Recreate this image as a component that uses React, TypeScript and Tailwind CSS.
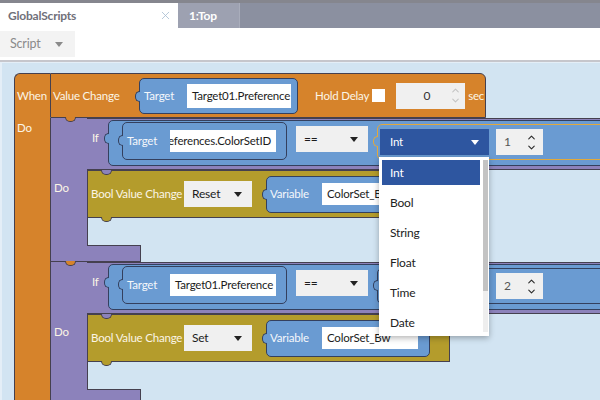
import { ChevronDown, ChevronUp, X } from "lucide-react";

const TYPES = ["Int", "Bool", "String", "Float", "Time", "Date"];

function Caret({ className = "fill-[#222]" }: { className?: string }) {
  return (
    <svg width="8" height="5" viewBox="0 0 8 5" className={`shrink-0 ${className}`}>
      <polygon points="0,0 8,0 4,5" />
    </svg>
  );
}

// little round tab on the left edge of a value block
function LeftNotch({ top, color = "bg-[#6a9bd2]", border = "border-[#34405e]" }: { top: number; color?: string; border?: string }) {
  return (
    <span
      className={`absolute left-[-5px] w-[5px] h-[11px] rounded-l-full border border-r-0 ${color} ${border}`}
      style={{ top }}
    />
  );
}

function TopNotch({ left, color }: { left: number; color: string }) {
  return (
    <span
      className={`absolute top-[-1px] w-[11px] h-[5px] rounded-b-full border border-t-0 border-[#45404f] ${color}`}
      style={{ left }}
    />
  );
}

function Field({ w, h, text, alignEnd }: { w: number; h: number; text: string; alignEnd?: boolean }) {
  return (
    <div
      className={`shrink-0 bg-white flex items-center overflow-hidden whitespace-nowrap text-[11.5px] text-[#1c1c1c] ${alignEnd ? "justify-end pr-[5px]" : "pl-[5px]"}`}
      style={{ width: w, height: h }}
    >
      {text}
    </div>
  );
}

function NumBox({ value, light }: { value: string; light?: boolean }) {
  const c = light ? "text-[#c4c4c4]" : "text-[#2a2a2a]";
  return (
    <div className={`shrink-0 bg-[#f0f0f0] flex items-center ${light ? "w-[69px] h-[26px] justify-end pr-[4px]" : "w-[47px] h-[26px] pl-[8px] justify-between pr-[6px]"}`}>
      <span className={`text-[12px] ${light ? "text-[#333] mr-[20px]" : "text-[#555]"}`}>{value}</span>
      <div className={`flex flex-col ${c}`}>
        <ChevronUp size={11} strokeWidth={2.4} className="-mb-[1px]" />
        <ChevronDown size={11} strokeWidth={2.4} />
      </div>
    </div>
  );
}

function Select({ w, text }: { w: number; text: string }) {
  return (
    <div
      className="shrink-0 h-[26px] bg-[#f0f0f0] flex items-center justify-between pl-[8px] pr-[10px] text-[12px] text-[#1c1c1c]"
      style={{ width: w }}
    >
      <span>{text}</span>
      <Caret />
    </div>
  );
}

function IfBlock({ target, alignEnd, num, action, focused }: { target: string; alignEnd?: boolean; num: string; action: string; focused?: boolean }) {
  return (
    <div className="flex flex-col">
      <div className="flex">
        <div className="w-[37px] shrink-0 bg-[#8c82bb] border-l border-[#45404f] relative pl-[3px] pt-[61px] text-[#fbf5e6]">
          <TopNotch left={14} color="bg-[#d6832b]" />
          Do
        </div>
        <div className="flex-1 flex flex-col">
          <div className="h-[52px] bg-[#8c82bb] border-y border-[#45404f] flex items-start">
            <span className="w-[21px] shrink-0 pl-[5px] pt-[10px] text-[#fbf5e6]">If</span>
            <div className="relative mt-[1px] h-[46px] flex-1 bg-[#6a9bd2] border border-[#34405e] rounded-l-[5px] flex items-start">
              <LeftNotch top={12} />
              <div className="relative shrink-0 ml-[13px] mt-[1px] w-[165px] h-[38px] bg-[#6a9bd2] border border-[#34405e] rounded-[5px] flex items-center">
                <LeftNotch top={12} />
                <span className="w-[47px] shrink-0 pl-[4px] text-[#f4f7fb]">Target</span>
                <Field w={106} h={22} text={target} alignEnd={alignEnd} />
              </div>
              <div className="shrink-0 ml-[9px] mt-[5px]">
                <Select w={72} text="==" />
              </div>
              <div
                className={`relative ml-[9px] mt-[3px] h-[36px] flex-1 bg-[#6a9bd2] border rounded-l-[5px] flex items-center ${focused ? "border-[#e2a93c]" : "border-[#34405e]"}`}
              >
                <LeftNotch top={11} border={focused ? "border-[#e2a93c]" : "border-[#34405e]"} />
                <div className="shrink-0 ml-[2px] w-[109px] h-[26px] bg-[#2e56a0] flex items-center justify-between pl-[10px] pr-[10px] text-white">
                  <span>Int</span>
                  <Caret className="fill-white" />
                </div>
                <div className="shrink-0 ml-[7px]">
                  <NumBox value={num} />
                </div>
              </div>
            </div>
          </div>
          <div className="relative w-[363px] h-[48px] bg-[#b49c2c] border border-[#45404f] flex items-center">
            <TopNotch left={13} color="bg-[#8c82bb]" />
            <span className="absolute left-[13px] bottom-[-5px] w-[11px] h-[5px] rounded-b-full border border-t-0 border-[#45404f] bg-[#b49c2c]" />
            <span className="w-[96px] shrink-0 pl-[3px] text-[#fbf5e6] whitespace-nowrap">Bool Value Change</span>
            <Select w={68} text={action} />
            <div className="relative shrink-0 ml-[14px] w-[164px] h-[37px] bg-[#6a9bd2] border border-[#34405e] rounded-[5px] flex items-center">
              <LeftNotch top={12} />
              <span className="w-[55px] shrink-0 pl-[3px] text-[#f4f7fb]">Variable</span>
              <Field w={96} h={22} text="ColorSet_Bw" />
            </div>
          </div>
          <div className="h-[27px] border-l border-[#45404f]" />
        </div>
      </div>
      <div className="flex h-[17px]">
        <div className="w-[37px] bg-[#8c82bb] border-l border-b border-[#45404f]" />
        <div className="w-[54px] bg-[#8c82bb] border-t border-r border-b border-[#45404f]" />
      </div>
    </div>
  );
}

export default function App() {
  return (
    <div className="relative w-[600px] h-[400px] overflow-hidden flex flex-col bg-white font-['Lato',sans-serif] text-[11.5px] tracking-[-0.2px]">
      {/* tabs */}
      <div className="h-[28px] shrink-0 flex bg-[#8b90a0] border-t-[3px] border-[#85868e]">
        <div className="w-[178px] bg-white flex items-center justify-between pl-[8px] pr-[6px]">
          <span className="text-[12px] font-bold text-[#707079]">GlobalScripts</span>
          <X size={13} strokeWidth={1.5} className="text-[#a8bdd2]" />
        </div>
        <div className="w-[62px] bg-[#9da1b1] border-r border-[#a9adbb] flex items-center pl-[11px] text-[12px] font-bold text-white">
          1:Top
        </div>
      </div>
      {/* toolbar */}
      <div className="h-[32px] shrink-0 bg-white pt-[3px]">
        <div className="w-[75px] h-[26px] bg-[#f3f3f3] flex items-center justify-between pl-[10px] pr-[12px] text-[12.5px] text-[#8a8a8a]">
          <span>Script</span>
          <Caret className="fill-[#8a8a8a]" />
        </div>
      </div>
      <div className="h-[2px] shrink-0 bg-[#c6c6cc]" />
      {/* canvas */}
      <div className="flex-1 bg-[#d2e4f2] border-t border-l-[2px] border-[#e4eef7] pl-[12px] pt-[10px] overflow-hidden">
        <div className="flex w-[640px]">
          <div className="w-[36px] shrink-0 bg-[#d6832b] rounded-tl-[6px] border border-r-0 border-[#45404f] flex flex-col pl-[2px] text-[#fbf5e6]">
            <div className="h-[44px] flex items-center">When</div>
            <div className="pt-[1px]">Do</div>
          </div>
          <div className="flex-1 flex flex-col">
            <div className="w-[436px] h-[45px] bg-[#d6832b] rounded-tr-[6px] border border-[#45404f] flex items-center pl-[2px] text-[#fbf5e6]">
              <span className="w-[86px] shrink-0 whitespace-nowrap">Value Change</span>
              <div className="relative shrink-0 w-[159px] h-[36px] bg-[#6a9bd2] border border-[#34405e] rounded-[5px] flex items-center">
                <LeftNotch top={12} />
                <span className="w-[47px] shrink-0 pl-[4px] text-[#f4f7fb]">Target</span>
                <Field w={104} h={24} text="Target01.Preference" />
              </div>
              <span className="shrink-0 ml-[17px] whitespace-nowrap">Hold Delay</span>
              <span className="shrink-0 ml-[3px] w-[13px] h-[13px] bg-white" />
              <div className="shrink-0 ml-[11px]">
                <NumBox value="0" light />
              </div>
              <span className="shrink-0 ml-[3px]">sec</span>
            </div>
            <IfBlock target="Target01.Preferences.ColorSetID" alignEnd num="1" action="Reset" focused />
            <IfBlock target="Target01.Preference" num="2" action="Set" />
          </div>
        </div>
      </div>
      {/* open type list */}
      <div className="absolute left-[379px] top-[157px] w-[110px] h-[179px] bg-white shadow-[0_2px_6px_rgba(0,0,0,0.3)] flex pt-[3px] pl-[3px]">
        <div className="w-[98px] flex flex-col">
          {TYPES.map((t, i) => (
            <div key={t} className="h-[30px] shrink-0">
              <div
                className={`h-[25px] flex items-center pl-[8px] text-[12px] ${i === 0 ? "bg-[#2e56a0] text-white" : "text-[#222]"}`}
              >
                {t}
              </div>
            </div>
          ))}
        </div>
        <div className="ml-[3px] w-[5px] h-[172px] bg-[#eeeeee]">
          <div className="h-[131px] bg-[#c3c3c3]" />
        </div>
      </div>
    </div>
  );
}
